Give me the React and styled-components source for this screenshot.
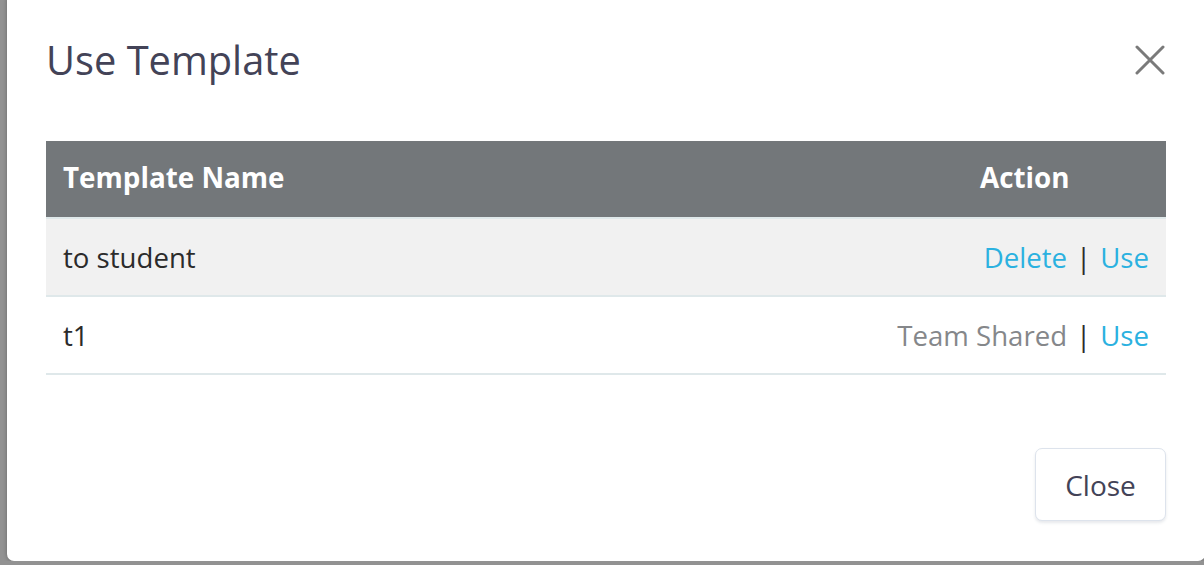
import React from 'react'
import styled, {createGlobalStyle} from 'styled-components'

const Global = createGlobalStyle`
	html, body {
		margin: 0;
		padding: 0;
		background: #929292;
		overflow: hidden;
		font-family: "Open Sans", "Liberation Sans", sans-serif;
	}
`

const Modal = styled.div`
	box-sizing: border-box;
	margin: -6px 0 0 7px;
	width: 1198px;
	height: 567px;
	padding: 39px 39px 40px;
	background: #fff;
	border-radius: 7px;
	box-shadow: 0 0 4px rgba(0, 0, 0, 0.3);
	display: flex;
	flex-direction: column;
`

const Header = styled.div`
	display: flex;
	justify-content: space-between;
	align-items: flex-start;
	margin-bottom: 55px;
`

const Title = styled.h1`
	margin: 0;
	font-size: 39.8px;
	font-weight: 400;
	line-height: 53px;
	color: #434357;
`

const CloseX = styled.button`
	border: 0;
	background: none;
	padding: 0;
	margin: 12px 1px 0 0;
	width: 30px;
	height: 30px;
	cursor: pointer;
	display: flex;
`

const Table = styled.div`
	display: grid;
	grid-template-columns: 1fr 203px;
`

const HeadCell = styled.div`
	background: #73777a;
	color: #fff;
	font-weight: 700;
	font-size: 27.8px;
	height: 72px;
	display: flex;
	align-items: center;
	padding: 0 17px 4px;
	border-bottom: 2px solid #dfe8ea;
`

const Cell = styled.div`
	background: ${p => (p.$shaded ? '#f1f1f1' : '#fff')};
	color: #2b2b2b;
	font-size: 27.6px;
	height: 76px;
	display: flex;
	align-items: center;
	justify-content: ${p => (p.$right ? 'flex-end' : 'flex-start')};
	padding: 0 17px;
	border-bottom: 2px solid #dfe8ea;
	white-space: nowrap;
`

const Link = styled.a`
	color: #2bb1e0;
	text-decoration: none;
	cursor: pointer;
`

const Muted = styled.span`
	color: #85878a;
`

const Sep = styled.span`
	color: #2b2b2b;
	margin: 0 9px;
`

const Footer = styled.div`
	margin-top: auto;
	display: flex;
	justify-content: flex-end;
`

const Button = styled.button`
	box-sizing: border-box;
	width: 131px;
	height: 73px;
	background: #fff;
	border: 1.5px solid #dde3ec;
	border-radius: 7px;
	box-shadow: 0 2px 3px rgba(60, 70, 100, 0.12);
	font-family: inherit;
	font-size: 28px;
	color: #434357;
	cursor: pointer;
`

const rows = [
	{name: 'to student', own: true},
	{name: 't1', own: false},
]

const App = () => (
	<>
		<Global />
		<Modal>
			<Header>
				<Title>Use Template</Title>
				<CloseX aria-label="close">
					<svg width="30" height="30" viewBox="0 0 30 30">
						<path d="M2 2L28 28M28 2L2 28" stroke="#7a7a7a" strokeWidth="3" strokeLinecap="round" />
					</svg>
				</CloseX>
			</Header>
			<Table>
				<HeadCell>Template Name</HeadCell>
				<HeadCell>Action</HeadCell>
				{rows.map((r, i) => (
					<React.Fragment key={r.name}>
						<Cell $shaded={i === 0}>{r.name}</Cell>
						<Cell $shaded={i === 0} $right>
							{r.own ? <Link>Delete</Link> : <Muted>Team Shared</Muted>}
							<Sep>|</Sep>
							<Link>Use</Link>
						</Cell>
					</React.Fragment>
				))}
			</Table>
			<Footer>
				<Button>Close</Button>
			</Footer>
		</Modal>
	</>
)

export default App
